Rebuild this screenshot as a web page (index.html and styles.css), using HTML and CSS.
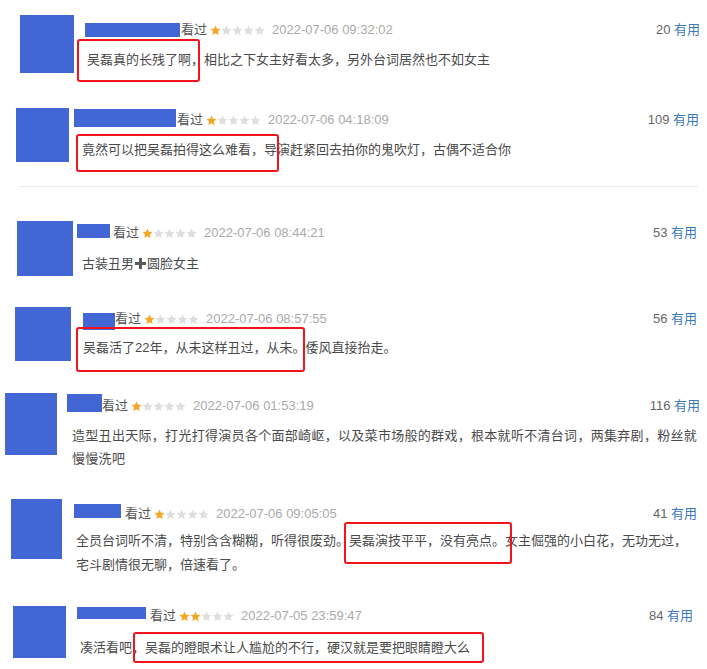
FILE: index.html
```html
<!DOCTYPE html>
<html lang="zh-CN">
<head>
  <meta charset="UTF-8">
  <meta name="viewport" content="width=device-width, initial-scale=1.0">
  <title>短评</title>
  <link rel="stylesheet" href="styles.css">
</head>
<body>

  <svg class="defs" width="0" height="0">
    <symbol id="star" viewBox="0 0 24 24"><path d="M12 1l3.2 7.2 7.8.7-5.9 5.2 1.8 7.7L12 17.8l-6.9 4 1.8-7.7L1 8.9l7.8-.7z"/></symbol>
  </svg>

  <div class="review r1">
    <div class="avatar"></div>
    <div class="body">
      <div class="meta">
        <span class="name"></span>
        <span class="seen">看过</span>
        <span class="stars"><svg class="on"><use href="#star"/></svg><svg><use href="#star"/></svg><svg><use href="#star"/></svg><svg><use href="#star"/></svg><svg><use href="#star"/></svg></span>
        <span class="date">2022-07-06 09:32:02</span>
        <span class="votes">20 <span class="useful">有用</span></span>
      </div>
      <p class="text"><span class="hl">吴磊真的长残了啊</span>，相比之下女主好看太多，另外台词居然也不如女主</p>
    </div>
  </div>

  <div class="review r2">
    <div class="avatar"></div>
    <div class="body">
      <div class="meta">
        <span class="name"></span>
        <span class="seen">看过</span>
        <span class="stars"><svg class="on"><use href="#star"/></svg><svg><use href="#star"/></svg><svg><use href="#star"/></svg><svg><use href="#star"/></svg><svg><use href="#star"/></svg></span>
        <span class="date">2022-07-06 04:18:09</span>
        <span class="votes">109 <span class="useful">有用</span></span>
      </div>
      <p class="text"><span class="hl">竟然可以把吴磊拍得这么难看，</span>导演赶紧回去拍你的鬼吹灯，古偶不适合你</p>
    </div>
  </div>

  <div class="divider"></div>

  <div class="review r3">
    <div class="avatar"></div>
    <div class="body">
      <div class="meta">
        <span class="name"></span>
        <span class="seen">看过</span>
        <span class="stars"><svg class="on"><use href="#star"/></svg><svg><use href="#star"/></svg><svg><use href="#star"/></svg><svg><use href="#star"/></svg><svg><use href="#star"/></svg></span>
        <span class="date">2022-07-06 08:44:21</span>
        <span class="votes">53 <span class="useful">有用</span></span>
      </div>
      <p class="text">古装丑男<svg class="plus" width="13" height="13" viewBox="0 0 13 13"><path d="M5 1h3v4h4v3H8v4H5V8H1V5h4z" fill="#5a5a5a"/></svg>圆脸女主</p>
    </div>
  </div>

  <div class="review r4">
    <div class="avatar"></div>
    <div class="body">
      <div class="meta">
        <span class="name"></span>
        <span class="seen">看过</span>
        <span class="stars"><svg class="on"><use href="#star"/></svg><svg><use href="#star"/></svg><svg><use href="#star"/></svg><svg><use href="#star"/></svg><svg><use href="#star"/></svg></span>
        <span class="date">2022-07-06 08:57:55</span>
        <span class="votes">56 <span class="useful">有用</span></span>
      </div>
      <p class="text"><span class="hl">吴磊活了22年，从未这样丑过，从未。</span>倭风直接抬走。</p>
    </div>
  </div>

  <div class="review r5">
    <div class="avatar"></div>
    <div class="body">
      <div class="meta">
        <span class="name"></span>
        <span class="seen">看过</span>
        <span class="stars"><svg class="on"><use href="#star"/></svg><svg><use href="#star"/></svg><svg><use href="#star"/></svg><svg><use href="#star"/></svg><svg><use href="#star"/></svg></span>
        <span class="date">2022-07-06 01:53:19</span>
        <span class="votes">116 <span class="useful">有用</span></span>
      </div>
      <p class="text">造型丑出天际，打光打得演员各个面部崎岖，以及菜市场般的群戏，根本就听不清台词，两集弃剧，粉丝就<br>慢慢洗吧</p>
    </div>
  </div>

  <div class="review r6">
    <div class="avatar"></div>
    <div class="body">
      <div class="meta">
        <span class="name"></span>
        <span class="seen">看过</span>
        <span class="stars"><svg class="on"><use href="#star"/></svg><svg><use href="#star"/></svg><svg><use href="#star"/></svg><svg><use href="#star"/></svg><svg><use href="#star"/></svg></span>
        <span class="date">2022-07-06 09:05:05</span>
        <span class="votes">41 <span class="useful">有用</span></span>
      </div>
      <p class="text">全员台词听不清，特别含含糊糊，听得很废劲。<span class="hl">吴磊演技平平，没有亮点。</span>女主倔强的小白花，无功无过，<br>宅斗剧情很无聊，倍速看了。</p>
    </div>
  </div>

  <div class="review r7">
    <div class="avatar"></div>
    <div class="body">
      <div class="meta">
        <span class="name"></span>
        <span class="seen">看过</span>
        <span class="stars"><svg class="on"><use href="#star"/></svg><svg class="on"><use href="#star"/></svg><svg><use href="#star"/></svg><svg><use href="#star"/></svg><svg><use href="#star"/></svg></span>
        <span class="date">2022-07-05 23:59:47</span>
        <span class="votes">84 <span class="useful">有用</span></span>
      </div>
      <p class="text">凑活看吧，<span class="hl">吴磊的瞪眼术让人尴尬的不行，硬汉就是要把眼睛瞪大么</span></p>
    </div>
  </div>

</body>
</html>
```

FILE: styles.css
```css
body{
  margin: 0;
  background-color: white;
  font-family: "Liberation Sans", "Noto Sans CJK SC", sans-serif;
  font-size: 13px;
  color: #4a4a4a;
  width: 707px;
  height: 669px;
  overflow: hidden;
}

.defs{
  position: absolute;
}

.review{
  display: flex;
  align-items: flex-start;
}

.avatar{
  flex: none;
  background-color: #4267d5;
}

.body{
  flex: 1;
}

.meta{
  display: flex;
  align-items: center;
  height: 16px;
  line-height: 16px;
  white-space: nowrap;
}

.name{
  display: inline-block;
  background-color: #4267d5;
}

.seen{
  color: #555;
}

.stars{
  display: flex;
  margin-left: 3px;
}

.stars svg{
  width: 11px;
  height: 11px;
  fill: #dedede;
}

.stars svg.on{
  fill: #f5a623;
}

.date{
  margin-left: 7px;
  color: #aaa;
}

.votes{
  margin-left: auto;
  color: #666;
}

.useful{
  color: #3d78b8;
}

p.text{
  margin: 0;
  line-height: 23px;
  white-space: nowrap;
}

.plus{
  vertical-align: -2px;
}

/* the red boxes drawn over the screenshot */
.hl{
  position: relative;
}

.hl::after{
  content: '';
  position: absolute;
  top: var(--t);
  right: var(--r);
  bottom: var(--b);
  left: var(--l);
  border: 2px solid #f2141c;
  border-radius: 3px;
}

.divider{
  height: 1px;
  margin: 0 9px 0 18px;
  background-color: #ececec;
}

/* row 1 */
.r1{ height: 100px; }
.r1 .avatar{ width: 54px; height: 58px; margin: 15px 0 0 20px; }
.r1 .body{ margin: 22px 0 0 13px; padding-right: 7px; }
.r1 .name{ width: 95px; height: 14px; margin: 0 1px 0 -2px; }
.r1 .text{ margin-top: 10px; }
.r1 .hl{ --t: -13px; --b: -15px; --l: -10px; --r: -9px; }

/* row 2 */
.r2{ height: 86px; }
.r2 .avatar{ width: 53px; height: 54px; margin: 8px 0 0 16px; }
.r2 .body{ margin: 12px 0 0 13px; padding-right: 8px; }
.r2 .name{ width: 102px; height: 18px; margin: -4px 1px 0 -8px; }
.r2 .text{ margin-top: 10px; }
.r2 .hl{ --t: -8px; --b: -15px; --l: -6px; --r: -15px; }

/* row 3 */
.r3{ height: 113px; }
.r3 .avatar{ width: 56px; height: 55px; margin: 34px 0 0 17px; }
.r3 .body{ margin: 38px 0 0 9px; padding-right: 10px; }
.r3 .name{ width: 33px; height: 14px; margin: -4px 3px 0 -5px; }
.r3 .text{ margin-top: 11px; }

/* row 4 */
.r4{ height: 85px; }
.r4 .avatar{ width: 56px; height: 54px; margin: 7px 0 0 15px; }
.r4 .body{ margin: 11px 0 0 12px; padding-right: 10px; }
.r4 .name{ width: 32px; height: 17px; margin: 4px 0 0 0; }
.r4 .text{ margin-top: 9px; }
.r4 .hl{ --t: -13px; --b: -17px; --l: -7px; --r: 0px; }

/* row 5 */
.r5{ height: 105px; }
.r5 .avatar{ width: 52px; height: 62px; margin: 8px 0 0 5px; }
.r5 .body{ margin: 13px 0 0 15px; padding-right: 7px; }
.r5 .name{ width: 35px; height: 18px; margin: -6px 0 0 -5px; }
.r5 .text{ margin-top: 10px; letter-spacing: 0.3px; }

/* row 6 */
.r6{ height: 108px; }
.r6 .avatar{ width: 51px; height: 60px; margin: 9px 0 0 11px; }
.r6 .body{ margin: 16px 0 0 14px; padding-right: 10px; }
.r6 .name{ width: 47px; height: 14px; margin: -6px 4px 0 -2px; }
.r6 .text{ margin-top: 7px; line-height: 23.5px; }
.r6 .hl{ --t: -11px; --b: -16px; --l: -5px; --r: -7px; }

/* row 7 */
.r7{ height: 71px; }
.r7 .avatar{ width: 53px; height: 52px; margin: 8px 0 0 13px; }
.r7 .body{ margin: 10px 0 0 14px; padding-right: 14px; }
.r7 .name{ width: 69px; height: 12px; margin: -6px 4px 0 -3px; }
.r7 .text{ margin-top: 12px; }
.r7 .hl{ --t: -8px; --b: -8px; --l: -12px; --r: -14px; }
```
